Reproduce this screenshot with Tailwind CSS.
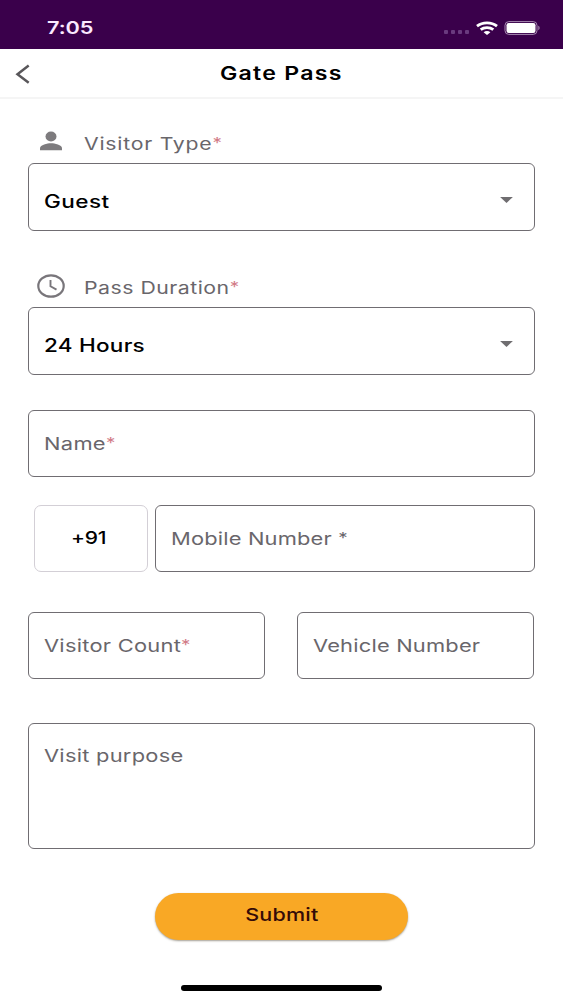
<!DOCTYPE html>
<html lang="en">
<head>
<meta charset="utf-8">
<title>Gate Pass</title>
<script src="https://cdn.jsdelivr.net/npm/@tailwindcss/browser@4"></script>
</head>
<body class="bg-white">
<div class="flex h-[1000px] w-[563px] flex-col overflow-hidden bg-white font-['Inter','Open_Sans',sans-serif] text-[17.5px] leading-6 whitespace-nowrap text-[#69666b]">

  <!-- Status bar -->
  <div class="flex h-[49px] shrink-0 items-center justify-between bg-[#3a004b] pt-[7px] pr-[22px] pl-[47px]">
    <span class="origin-left scale-x-[1.24] text-[17.5px] font-semibold tracking-[-0.1px] text-[#fbe9ff]">7:05</span>
    <div class="flex items-center">
      <div class="mt-[7px] mr-[7px] flex gap-[3px]">
        <i class="size-1 rounded-[1px] bg-[#693a7e]"></i><i class="size-1 rounded-[1px] bg-[#693a7e]"></i><i class="size-1 rounded-[1px] bg-[#693a7e]"></i><i class="size-1 rounded-[1px] bg-[#693a7e]"></i>
      </div>
      <svg class="mr-[6px] h-[14px] w-[22px]" viewBox="0 0 22 14" fill="none" stroke="#fff" stroke-width="2.8">
        <path d="M1 5.200C6.500 .7 15.500 .7 21 5.200"/>
        <path d="M4.700 8.700c3.500-2.800 9.100-2.800 12.600 0"/>
        <path d="M11 13.900 7.600 11.200c1.900-1.500 4.900-1.500 6.800 0z" fill="#fff" stroke="none"/>
      </svg>
      <svg class="h-[14px] w-[37px]" viewBox="0 0 37 14">
        <rect x="1" y=".6" width="32" height="12.800" rx="3.800" fill="none" stroke="#a98bb3" stroke-width="1"/>
        <rect x="2.500" y="2" width="29" height="10" rx="2.200" fill="#fff"/>
        <path d="M34.300 4.800c1.700.6 1.700 3.800 0 4.400z" fill="#a98bb3"/>
      </svg>
    </div>
  </div>

  <!-- Title bar -->
  <header class="grid h-[50px] shrink-0 grid-cols-[220px_1fr] border-b-[2px] border-[#f5f5f5] pt-[1px]">
    <svg class="mt-[14px] ml-[15px] h-[20px] w-[15px]" viewBox="0 0 15 20" fill="none" stroke="#59575a" stroke-width="2.500"><path d="M13.700 1.500 2.500 10.200l11.200 8.500"/></svg>
    <h1 class="mt-[11px] w-fit origin-left scale-x-125 text-[18.5px] font-semibold tracking-[1px] text-black">Gate Pass</h1>
  </header>

  <main class="flex flex-col pr-[28px] pl-[28px]">
    <!-- Visitor type -->
    <div class="mt-[32px] flex h-[24px] items-center">
      <svg class="mb-[5px] ml-[12px] h-[20px] w-[22px]" viewBox="0 0 22 20" fill="#7d7b7e"><ellipse cx="11" cy="5.500" rx="5.500" ry="4.900"/><path d="M0 19.200v-2c0-3.300 7.300-5 11-5s11 1.700 11 5v2z"/></svg>
      <span class="mt-[2px] ml-[22px] origin-left scale-x-125 text-[17px] tracking-[0.6px]">Visitor Type<span class="inline-block -translate-y-[2px] text-[15px] leading-none text-[#d27c88]">*</span></span>
    </div>
    <div class="mt-[8px] flex h-[68px] items-center justify-between rounded-[6px] border border-[#706d72] pr-[21px] pl-[15px] pt-[8px]">
      <span class="mt-[2px] origin-left scale-x-125 text-[18px] font-medium tracking-[0.35px] text-black">Guest</span>
      <svg class="mb-[3px] h-[6px] w-[13px]" viewBox="0 0 13 6" fill="#6f6d70"><path d="M.1 0h12.800L6.500 6z"/></svg>
    </div>

    <!-- Pass duration -->
    <div class="mt-[44px] flex h-[24px] items-center">
      <svg class="mb-[2px] ml-[9px] h-[24px] w-[28px]" viewBox="0 0 28 24" fill="none" stroke="#79767b"><ellipse cx="14" cy="12" rx="12.700" ry="10.700" stroke-width="2.200"/><path d="M13.500 6v6.300l6 3.400" stroke-width="1.900"/></svg>
      <span class="mt-[2px] ml-[19px] origin-left scale-x-125 text-[17px] tracking-[0.4px]">Pass Duration<span class="inline-block -translate-y-[2px] text-[15px] leading-none text-[#d27c88]">*</span></span>
    </div>
    <div class="mt-[8px] flex h-[68px] items-center justify-between rounded-[6px] border border-[#706d72] pr-[21px] pl-[15px] pt-[8px]">
      <span class="mt-[2px] origin-left scale-x-125 text-[18px] font-medium tracking-[0.2px] text-black">24 Hours</span>
      <svg class="mb-[3px] h-[6px] w-[13px]" viewBox="0 0 13 6" fill="#6f6d70"><path d="M.1 0h12.800L6.500 6z"/></svg>
    </div>

    <!-- Name -->
    <div class="mt-[35px] flex h-[67px] items-center rounded-[6px] border border-[#706d72] pt-[1px] pl-[15px]">
      <span class="origin-left scale-x-125 tracking-[0.25px]">Name<span class="inline-block -translate-y-[2px] text-[15px] leading-none text-[#d27c88]">*</span></span>
    </div>

    <!-- Mobile number -->
    <div class="mt-[28px] flex h-[67px] pl-[6px]">
      <div class="flex w-[114px] items-center rounded-[7px] border-[1.5px] border-[#d3cfd6] pb-[1px] pl-[36px]">
        <span class="origin-left scale-x-[1.2] font-medium tracking-[-0.2px] text-black">+91</span>
      </div>
      <div class="ml-[7px] flex flex-1 items-center rounded-[6px] border border-[#706d72] pt-[1px] pl-[15px]">
        <span class="origin-left scale-x-125 tracking-[0.13px]">Mobile Number <span class="inline-block -translate-y-[2px] text-[15px] leading-none">*</span></span>
      </div>
    </div>

    <!-- Visitor count and vehicle -->
    <div class="mt-[40px] flex h-[67px] gap-[32px]">
      <div class="flex w-[237px] items-center rounded-[6px] border border-[#706d72] pt-[1px] pl-[15px]">
        <span class="origin-left scale-x-125 tracking-[0.2px]">Visitor Count<span class="inline-block -translate-y-[2px] text-[15px] leading-none text-[#d27c88]">*</span></span>
      </div>
      <div class="flex w-[237px] items-center rounded-[6px] border border-[#706d72] pt-[1px] pl-[15px]">
        <span class="origin-left scale-x-125 tracking-[0.15px]">Vehicle Number</span>
      </div>
    </div>

    <!-- Purpose -->
    <div class="mt-[44px] h-[126px] rounded-[6px] border border-[#706d72] pt-[20px] pl-[15px]">
      <span class="inline-block origin-left scale-x-125 tracking-[0.2px]">Visit purpose</span>
    </div>

    <button class="mt-[44px] ml-[127px] flex h-[47px] w-[253px] justify-center rounded-full bg-[#f9a825] pt-[10px] shadow-[0_1px_2px_rgba(90,80,60,0.55)]">
      <span class="scale-x-[1.23] font-medium tracking-[0.18px] text-[#350b08]">Submit</span>
    </button>
  </main>

  <!-- Home indicator -->
  <div class="mt-[45px] ml-[181px] h-[6px] w-[201px] shrink-0 rounded-full bg-black"></div>
</div>
</body>
</html>
